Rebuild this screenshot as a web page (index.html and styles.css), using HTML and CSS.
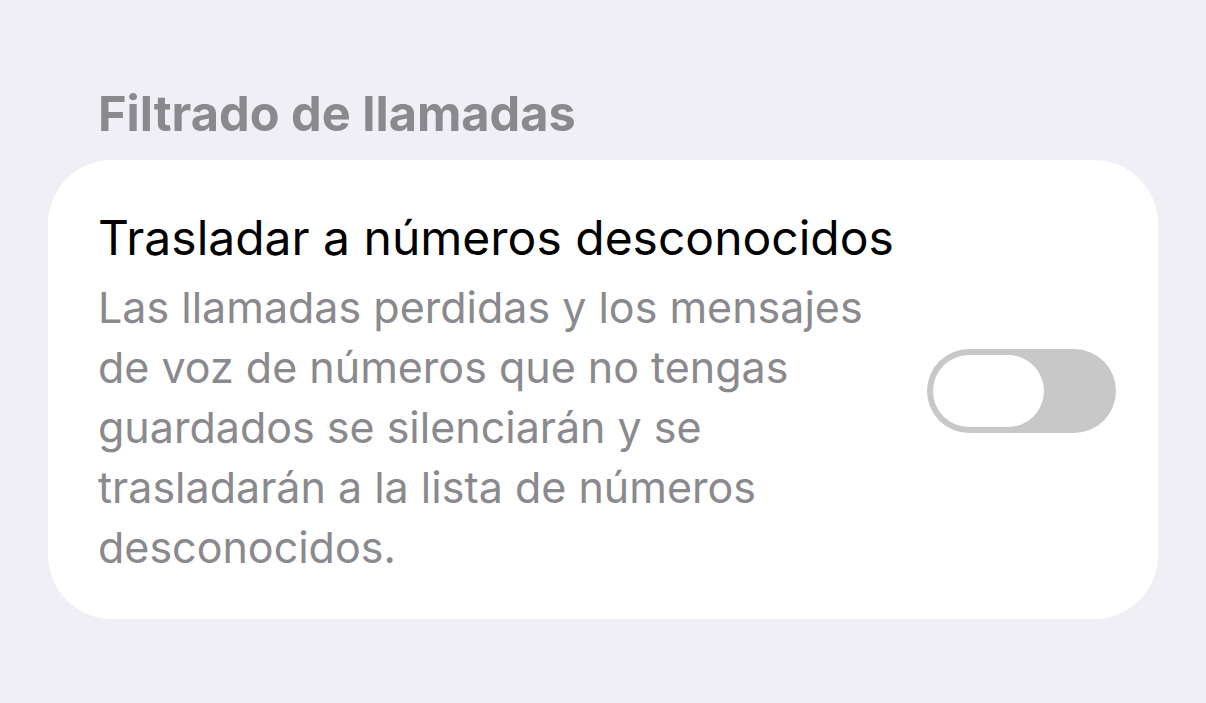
FILE: index.html
```html
<!DOCTYPE html>
<html lang="es">
<head>
    <meta charset="UTF-8">
    <meta name="viewport" content="width=device-width, initial-scale=1.0">
    <title>Filtrado de llamadas</title>
    <link rel="stylesheet" href="styles.css">
</head>
<body>
    <div class="section">
        <h2 class="section_title">Filtrado de llamadas</h2>

        <div class="card">
            <div class="row">
                <div class="row_text">
                    <div class="row_title">Trasladar a números desconocidos</div>
                    <div class="row_desc">Las llamadas perdidas y los mensajes de voz de números que no tengas guardados se silenciarán y se trasladarán a la lista de números desconocidos.</div>
                </div>
                <div class="toggle">
                    <div class="toggle_thumb"></div>
                </div>
            </div>
        </div>
    </div>
</body>
</html>
```

FILE: styles.css
```css
body {
    margin: 0;
    background-color: #f0eff5;
    font-family: Inter, "Liberation Sans", sans-serif;
}

.section {
    padding: 86px 48px 0 48px;
}

.section_title {
    margin: 0 0 18px 50px;
    font-size: 48.7px;
    font-weight: 700;
    color: #8a898e;
    line-height: 56px;
}

.card {
    width: 1110px;
    box-sizing: border-box;
    background: white;
    border-radius: 64px;
    padding: 50px 42px 42px 50px;
}

.row {
    display: flex;
    align-items: center;
    justify-content: space-between;
}

.row_text {
    width: 800px;
}

.row_title {
    font-size: 48px;
    color: black;
    line-height: 56px;
    margin-bottom: 11px;
}

.row_desc {
    font-size: 43px;
    color: #8a898e;
    line-height: 60px;
    width: 795px;
}

.toggle {
    width: 189px;
    height: 84px;
    border-radius: 42px;
    background: #c8c8c8;
    padding: 6px;
    box-sizing: border-box;
    margin-bottom: 6px;
}

.toggle_thumb {
    width: 111px;
    height: 72px;
    border-radius: 36px;
    background: white;
}
```
